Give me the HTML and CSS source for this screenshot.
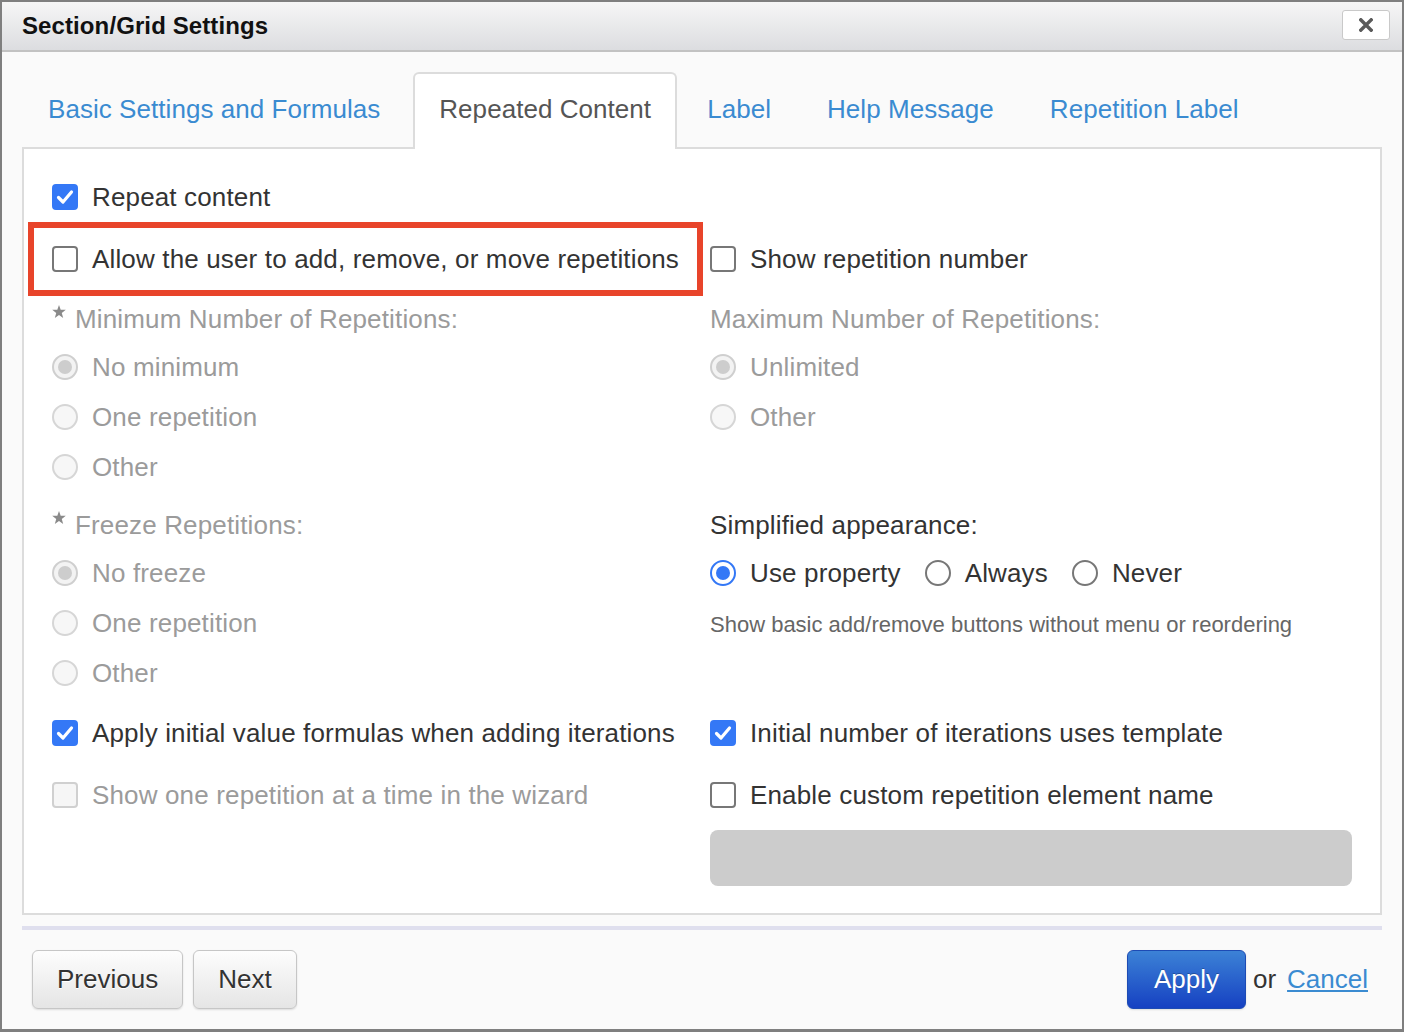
FILE: index.html
```html
<!DOCTYPE html>
<html lang="en">
<head>
<meta charset="utf-8">
<title>Section/Grid Settings</title>
<link rel="stylesheet" href="styles.css">
</head>
<body>
<div class="dialog">
  <header class="titlebar">
    <h1 class="title">Section/Grid Settings</h1>
    <button class="close" type="button" aria-label="Close">
      <svg width="14" height="14" viewBox="0 0 14 14"><path d="M1.8 1.8 L12.2 12.2 M12.2 1.8 L1.8 12.2" stroke="#5a5a5a" stroke-width="3.4" stroke-linecap="square" fill="none"/></svg>
    </button>
  </header>

  <div class="content">
    <nav class="tabs">
      <a class="tab first" href="#">Basic Settings and Formulas</a>
      <span class="tab active">Repeated Content</span>
      <a class="tab" href="#">Label</a>
      <a class="tab" href="#">Help Message</a>
      <a class="tab" href="#">Repetition Label</a>
    </nav>

    <section class="panel">
      <div class="row">
        <div class="col left">
          <span class="opt"><span class="cb on"><svg width="26" height="26" viewBox="0 0 26 26"><path d="M6.5 13.5 L11 18 L19.5 8" stroke="#fff" stroke-width="3.2" fill="none" stroke-linecap="round" stroke-linejoin="round"/></svg></span><span class="txt">Repeat content</span></span>
        </div>
        <div class="col right"></div>
      </div>

      <div class="row gap-36">
        <div class="col left">
          <span class="opt highlight"><span class="cb"></span><span class="txt">Allow the user to add, remove, or move repetitions</span></span>
        </div>
        <div class="col right">
          <span class="opt"><span class="cb"></span><span class="txt">Show repetition number</span></span>
        </div>
      </div>

      <div class="row gap-34">
        <div class="col left">
          <span class="label dis"><svg class="star" width="14" height="13" viewBox="0 0 24 23"><path d="M12 0 L15 8.3 L24 8.6 L16.9 14.1 L19.4 22.8 L12 17.7 L4.6 22.8 L7.1 14.1 L0 8.6 L9 8.3 Z" fill="#8a8a8a"/></svg>Minimum Number of Repetitions:</span>
        </div>
        <div class="col right">
          <span class="label dis">Maximum Number of Repetitions:</span>
        </div>
      </div>

      <div class="row gap-22">
        <div class="col left"><span class="opt dis"><span class="rb dis on"></span><span class="txt">No minimum</span></span></div>
        <div class="col right"><span class="opt dis"><span class="rb dis on"></span><span class="txt">Unlimited</span></span></div>
      </div>

      <div class="row gap-24">
        <div class="col left"><span class="opt dis"><span class="rb dis"></span><span class="txt">One repetition</span></span></div>
        <div class="col right"><span class="opt dis"><span class="rb dis"></span><span class="txt">Other</span></span></div>
      </div>

      <div class="row gap-24">
        <div class="col left"><span class="opt dis"><span class="rb dis"></span><span class="txt">Other</span></span></div>
        <div class="col right"></div>
      </div>

      <div class="row gap-32">
        <div class="col left">
          <span class="label dis"><svg class="star" width="14" height="13" viewBox="0 0 24 23"><path d="M12 0 L15 8.3 L24 8.6 L16.9 14.1 L19.4 22.8 L12 17.7 L4.6 22.8 L7.1 14.1 L0 8.6 L9 8.3 Z" fill="#8a8a8a"/></svg>Freeze Repetitions:</span>
        </div>
        <div class="col right"><span class="label">Simplified appearance:</span></div>
      </div>

      <div class="row gap-22">
        <div class="col left"><span class="opt dis"><span class="rb dis on"></span><span class="txt">No freeze</span></span></div>
        <div class="col right radios">
          <span class="opt"><span class="rb on blue"></span><span class="txt">Use property</span></span>
          <span class="opt"><span class="rb"></span><span class="txt">Always</span></span>
          <span class="opt"><span class="rb"></span><span class="txt">Never</span></span>
        </div>
      </div>

      <div class="row gap-24">
        <div class="col left"><span class="opt dis"><span class="rb dis"></span><span class="txt">One repetition</span></span></div>
        <div class="col right"><span class="help">Show basic add/remove buttons without menu or reordering</span></div>
      </div>

      <div class="row gap-24">
        <div class="col left"><span class="opt dis"><span class="rb dis"></span><span class="txt">Other</span></span></div>
        <div class="col right"></div>
      </div>

      <div class="row gap-34">
        <div class="col left">
          <span class="opt"><span class="cb on"><svg width="26" height="26" viewBox="0 0 26 26"><path d="M6.5 13.5 L11 18 L19.5 8" stroke="#fff" stroke-width="3.2" fill="none" stroke-linecap="round" stroke-linejoin="round"/></svg></span><span class="txt">Apply initial value formulas when adding iterations</span></span>
        </div>
        <div class="col right">
          <span class="opt"><span class="cb on"><svg width="26" height="26" viewBox="0 0 26 26"><path d="M6.5 13.5 L11 18 L19.5 8" stroke="#fff" stroke-width="3.2" fill="none" stroke-linecap="round" stroke-linejoin="round"/></svg></span><span class="txt">Initial number of iterations uses template</span></span>
        </div>
      </div>

      <div class="row gap-36">
        <div class="col left"><span class="opt dis"><span class="cb dis"></span><span class="txt">Show one repetition at a time in the wizard</span></span></div>
        <div class="col right"><span class="opt"><span class="cb"></span><span class="txt">Enable custom repetition element name</span></span></div>
      </div>

      <div class="row tall gap-22">
        <div class="col left"></div>
        <div class="col right"><input class="field" type="text" disabled aria-label="Custom repetition element name"></div>
      </div>
    </section>

    <div class="sep"></div>

    <footer class="footer">
      <div class="nav">
        <button class="btn" type="button">Previous</button>
        <button class="btn" type="button">Next</button>
      </div>
      <div class="actions">
        <button class="btn primary" type="button">Apply</button>
        <span class="or">or</span>
        <a class="cancel" href="#">Cancel</a>
      </div>
    </footer>
  </div>
</div>
</body>
</html>
```

FILE: styles.css
```css
* { box-sizing: border-box; }

html, body {
  margin: 0;
  padding: 0;
  background: #fafafa;
}

body {
  font-family: "Liberation Sans", Arial, Helvetica, sans-serif;
  color: #333;
}

.dialog {
  width: 1404px;
  height: 1032px;
  border: 2px solid #7f7f7f;
  border-bottom-width: 3px;
  background: #fafafa;
  overflow: hidden;
}

/* title bar */
.titlebar {
  height: 50px;
  display: flex;
  align-items: center;
  justify-content: space-between;
  padding: 0 12px 0 20px;
  background: linear-gradient(#f6f6f6, #dcdde0);
  border-bottom: 2px solid #c2c2c2;
}

.title {
  margin: 0;
  font-size: 24px;
  font-weight: bold;
  color: #111;
  line-height: 48px;
  letter-spacing: 0.1px;
}

.close {
  width: 48px;
  height: 30px;
  margin-top: -2px;
  padding: 0;
  display: flex;
  align-items: center;
  justify-content: center;
  background: #fff;
  border: 1.5px solid #c9c9c9;
  border-radius: 3px;
}

/* content */
.content {
  padding: 20px 20px 0;
}

.tabs {
  display: flex;
  gap: 4px;
  padding-left: 0;
}

.tab {
  position: relative;
  z-index: 1;
  height: 77px;
  margin-bottom: -2px;
  padding: 0 24px 5px;
  display: flex;
  align-items: center;
  font-size: 26px;
  color: #3a8bd1;
  text-decoration: none;
  border: 2px solid transparent;
  border-bottom: 0;
  border-radius: 6px 6px 0 0;
  white-space: nowrap;
  letter-spacing: 0.05px;
}

.tab.first { margin-right: 3px; }

.tab.active {
  color: #555;
  background: #fff;
  border-color: #dcdcdc;
}

.panel {
  background: #fff;
  border: 2px solid #dcdcdc;
  padding: 35px 28px 27px;
}

.row {
  display: flex;
  height: 26px;
}

.row.tall { height: 56px; }

.gap-22 { margin-top: 22px; }
.gap-24 { margin-top: 24px; }
.gap-32 { margin-top: 32px; }
.gap-34 { margin-top: 34px; }
.gap-36 { margin-top: 36px; }

.col {
  display: flex;
  align-items: center;
}

.col.left { width: 658px; flex: none; }
.col.right { flex: 1; }

.radios .opt { margin-right: 24px; }

.opt {
  display: inline-flex;
  align-items: center;
  height: 26px;
  font-size: 26px;
  line-height: 26px;
  letter-spacing: 0.15px;
  white-space: nowrap;
}

.opt .txt { margin-left: 14px; }

.opt.dis { color: #9b9b9b; }

.highlight {
  min-width: 626px;
  outline: 6px solid #e8442a;
  outline-offset: 18px;
}

.label {
  display: inline-flex;
  align-items: center;
  font-size: 26px;
  line-height: 26px;
  letter-spacing: 0.15px;
  color: #333;
  white-space: nowrap;
}

.label.dis { color: #9b9b9b; }

.star {
  align-self: flex-start;
  margin-top: -1px;
  margin-right: 9px;
}

.help {
  padding-top: 3px;
  font-size: 22px;
  color: #666;
  white-space: nowrap;
}

/* checkboxes */
.cb {
  width: 26px;
  height: 26px;
  flex: none;
  border: 2px solid #777;
  border-radius: 4px;
  background: #fff;
  display: inline-flex;
  align-items: center;
  justify-content: center;
  overflow: hidden;
}

.cb svg { flex: none; }

.cb.on {
  background: #3478f6;
  border-color: #3478f6;
}

.cb.dis {
  border-color: #d0d0d0;
  background: #f6f6f6;
}

/* radios */
.rb {
  width: 26px;
  height: 26px;
  flex: none;
  border: 2px solid #777;
  border-radius: 50%;
  background: #fff;
  display: inline-flex;
  align-items: center;
  justify-content: center;
}

.rb.dis {
  border-color: #d6d6d6;
  background: #f7f7f7;
}

.rb.on::after {
  content: "";
  width: 14px;
  height: 14px;
  border-radius: 50%;
  background: #777;
}

.rb.dis.on {
  border-color: #cfcfcf;
  background: #f3f3f3;
}

.rb.dis.on::after { background: #cdcdcd; }

.rb.blue {
  border: 2.5px solid #3478f6;
}

.rb.blue::after { background: #3478f6; }

.field {
  width: 100%;
  height: 56px;
  border: 0;
  border-radius: 8px;
  background: #cccccc;
  font: inherit;
}

/* footer */
.sep {
  height: 4px;
  margin-top: 11px;
  background: #dfdfee;
}

.footer {
  display: flex;
  justify-content: space-between;
  align-items: center;
  padding: 20px 14px 0 10px;
}

.nav, .actions {
  display: flex;
  align-items: center;
}

.nav { gap: 10px; }

.btn {
  height: 59px;
  padding: 0 24px;
  font-family: "Liberation Sans", Arial, Helvetica, sans-serif;
  font-size: 26px;
  color: #333;
  text-shadow: 0 1px 0 #fff;
  background: linear-gradient(#fdfdfd, #e5e5e5);
  border: 1px solid #c6c6c6;
  border-radius: 6px;
  box-shadow: 0 1px 2px rgba(0,0,0,0.12);
}

.btn.primary {
  padding: 0 26px;
  color: #fff;
  text-shadow: 0 -1px 0 rgba(0,0,0,0.25);
  background: linear-gradient(#3c82d6, #1641c2);
  border-color: #1d4bb4;
}

.or {
  margin-left: 7px;
  font-size: 26px;
  color: #333;
}

.cancel {
  margin-left: 11px;
  font-size: 26px;
  color: #3a8bd1;
  text-decoration: underline;
}
```
